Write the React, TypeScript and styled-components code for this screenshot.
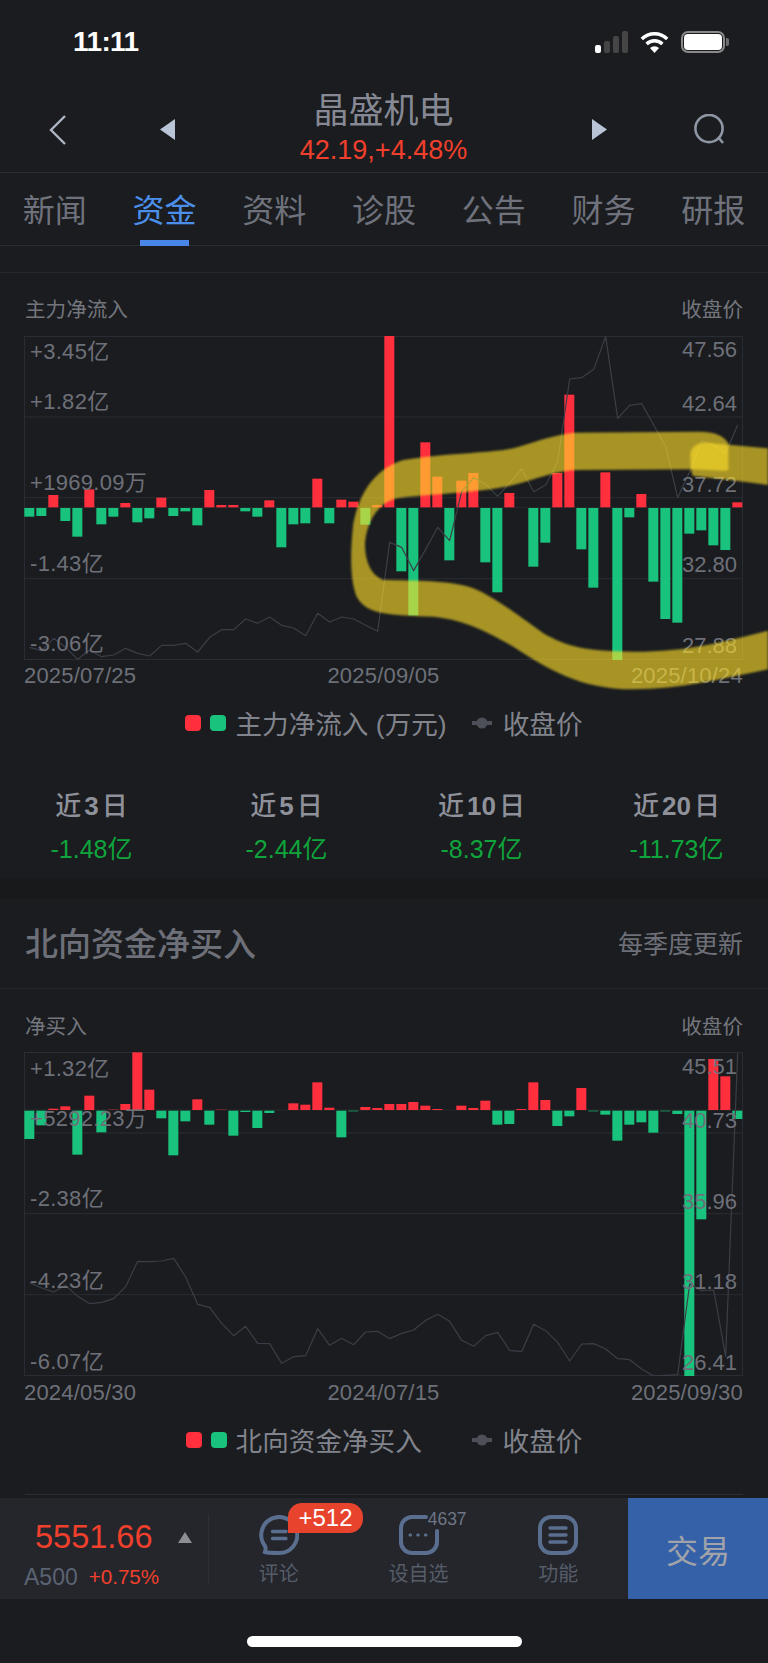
import React from "react";
import styled, { createGlobalStyle } from "styled-components";

interface AxisTick {
  text: string;
  y: number;
}

interface FlowChartProps {
  bars: number[];
  close: number[];
  baseline: number;
  left: AxisTick[];
  right: AxisTick[];
}

const RED = "#ff2f3d";
const GREEN = "#19c37d";
const QUOTE_RED = "#f0402c";

// chart series are in viewBox units, three per screen pixel
const FLOW_BARS = [
  -26, -24, 37, -39, -86, 54, -49, -26, 13, -43, -31, 29, -24, -10, -52, 52, 7, 7, -10, -26, 21,
  -118, -49, -46, 86, -46, 23, 17, -50, 7, 514, -190, -322, 195, 92, -157, 80, 103, -163, -253, 43,
  0, -176, -104, 103, 338, -124, -239, 105, -456, -28, 40, -221, -333, -344, -77, -67, -112, -126, 15,
];

const FLOW_CLOSE = [
  934, 944, 907, 934, 970, 942, 962, 957, 937, 952, 960, 928, 928, 922, 948, 904, 881, 881, 849, 862,
  843, 868, 876, 899, 832, 858, 843, 849, 868, 886, 619, 634, 704, 640, 574, 614, 467, 425, 445, 481,
  440, 399, 467, 447, 377, 129, 125, 100, 2, 247, 208, 203, 267, 332, 485, 407, 315, 327, 352, 267,
];

const NORTH_BARS = [
  -85, -44, 4, 11, -132, 43, -65, 1, 18, 173, 61, -23, -134, -32, 32, -42, 1, -75, -4, -52, -7, 0, 20,
  16, 83, 7, -80, -2, 9, 6, 18, 18, 24, 13, 3, 0, 13, 6, 28, -42, -40, 3, 83, 30, -46, -17, 66, -2, -12,
  -90, -42, -35, -66, -2, -10, -797, -326, 153, 101, -25,
];

const NORTH_CLOSE = [
  692, 708, 720, 700, 733, 755, 751, 740, 704, 628, 629, 627, 619, 675, 757, 766, 814, 851, 823, 874,
  875, 934, 914, 911, 830, 880, 859, 878, 840, 838, 860, 844, 834, 805, 787, 808, 865, 883, 851, 841,
  895, 899, 817, 836, 871, 927, 876, 875, 891, 920, 923, 951, 972, 970, 968, 696, 716, 714, 913, 3,
];

const GlobalStyle = createGlobalStyle`
  html,
  body {
    margin: 0;
    background: #1a1c1f;
    font-family: "Liberation Sans", "Noto Sans CJK SC", sans-serif;
  }
`;

const Page = styled.div`
  position: relative;
  width: 768px;
  height: 1663px;
  overflow: hidden;
  background: #1a1c1f;
`;

const StatusBar = styled.div`
  display: flex;
  align-items: center;
  justify-content: space-between;
  height: 84px;
  box-sizing: border-box;
  padding: 0 39px 0 73px;
`;

const Clock = styled.div`
  color: #fff;
  font-size: 28px;
  font-weight: 700;
  letter-spacing: -0.6px;
`;

const StatusIcons = styled.div`
  display: flex;
  align-items: center;
  gap: 12px;
`;

const SignalBars = styled.div`
  display: flex;
  align-items: flex-end;
  gap: 3px;
  height: 22px;
`;

const SignalBar = styled.span<{ $height: number; $on?: boolean }>`
  width: 6px;
  height: ${(p) => p.$height}px;
  border-radius: 2px;
  background: ${(p) => (p.$on ? "#fff" : "#454545")};
`;

const Battery = styled.div`
  position: relative;
  width: 44px;
  height: 22px;
  box-sizing: border-box;
  border: 2px solid #8a8a8a;
  border-radius: 7px;
  padding: 1px;
  margin-right: 4px;

  &::before {
    content: "";
    display: block;
    width: 100%;
    height: 100%;
    border-radius: 4px;
    background: #fff;
  }

  &::after {
    content: "";
    position: absolute;
    right: -6px;
    top: 5px;
    width: 3px;
    height: 8px;
    border-radius: 0 2px 2px 0;
    background: #6d6d6d;
  }
`;

const Header = styled.div`
  display: flex;
  align-items: center;
  justify-content: space-between;
  height: 89px;
  box-sizing: border-box;
  padding: 0 43px 0 49px;
  border-bottom: 1px solid #2a2c30;
`;

const HeaderGroup = styled.div<{ $width: number }>`
  display: flex;
  align-items: center;
  justify-content: space-between;
  width: ${(p) => p.$width}px;
  padding-top: 3px;
`;

const TitleBlock = styled.div`
  display: flex;
  flex-direction: column;
  align-items: center;
`;

const Title = styled.div`
  color: #868993;
  font-size: 35px;
  line-height: 42px;
`;

const Quote = styled.div`
  margin-top: 2px;
  color: ${QUOTE_RED};
  font-size: 27px;
  line-height: 32px;
`;

const Tabs = styled.div`
  display: flex;
  height: 73px;
  box-sizing: border-box;
  border-bottom: 1px solid #2a2c30;
`;

const Tab = styled.div<{ $active?: boolean }>`
  position: relative;
  flex: 1;
  display: flex;
  align-items: center;
  justify-content: center;
  padding-bottom: 2px;
  color: ${(p) => (p.$active ? "#4b8fea" : "#6f727c")};
  font-size: 32px;

  &::after {
    content: "";
    display: ${(p) => (p.$active ? "block" : "none")};
    position: absolute;
    left: 30px;
    bottom: -1px;
    width: 49px;
    height: 6px;
    background: #4a86e8;
  }
`;

const Strip = styled.div`
  height: 27px;
  box-sizing: border-box;
  border-bottom: 1px solid #25272b;
`;

const Section = styled.section`
  position: relative;
`;

const ChartCaption = styled.div<{ $top: number }>`
  display: flex;
  justify-content: space-between;
  align-items: center;
  height: 63px;
  box-sizing: border-box;
  padding: ${(p) => p.$top}px 25px 0;
  color: #74767e;
  font-size: 20.6px;
`;

const ChartFrame = styled.div`
  position: relative;
  width: 719px;
  height: 324px;
  margin-left: 24px;
`;

const ChartSvg = styled.svg`
  display: block;
  width: 719px;
  height: 324px;
`;

const GridLine = styled.line`
  stroke: #2a2c33;
  stroke-width: 3;
`;

const Baseline = styled.line`
  stroke: #26282e;
  stroke-width: 3;
`;

const Bar = styled.rect<{ $up: boolean }>`
  fill: ${(p) => (p.$up ? RED : GREEN)};
`;

const CloseLine = styled.polyline`
  fill: none;
  stroke: #3c3e47;
  stroke-width: 3.6;
  stroke-linejoin: round;
`;

const LeftAxisLabel = styled.span<{ $y: number }>`
  position: absolute;
  left: 6px;
  top: ${(p) => p.$y - 3}px;
  transform: translateY(-50%);
  color: #6e7079;
  font-size: 22px;
  letter-spacing: 0.3px;
  white-space: nowrap;
`;

const RightAxisLabel = styled.span<{ $y: number }>`
  position: absolute;
  right: 6px;
  top: ${(p) => p.$y}px;
  transform: translateY(-50%);
  color: #6e7079;
  font-size: 22px;
  white-space: nowrap;
`;

const DateRow = styled.div<{ $height: number }>`
  display: flex;
  justify-content: space-between;
  align-items: center;
  height: ${(p) => p.$height}px;
  padding: 0 25px 0 24px;
  color: #6e7079;
  font-size: 22px;
  letter-spacing: 0.2px;
`;

const Legend = styled.div<{ $height: number }>`
  display: flex;
  align-items: center;
  justify-content: center;
  height: ${(p) => p.$height}px;
  box-sizing: border-box;
  padding-bottom: 5px;
  color: #82848d;
  font-size: 26.6px;
`;

const Swatch = styled.span<{ $color: string }>`
  width: 16px;
  height: 16px;
  border-radius: 4px;
  margin-right: 9px;
  background: ${(p) => p.$color};
`;

const LegendName = styled.span`
  min-width: 211px;
  white-space: nowrap;
`;

const LegendMark = styled.svg`
  width: 20px;
  height: 14px;
  margin: 0 11px 0 25px;
`;

const Stats = styled.div`
  display: grid;
  grid-template-columns: repeat(4, 195px);
  justify-content: center;
  height: 120px;
  box-sizing: border-box;
  padding-top: 31px;
`;

const Stat = styled.div`
  display: flex;
  flex-direction: column;
  align-items: center;
`;

const StatLabel = styled.div`
  color: #8f919a;
  font-size: 26px;
  font-weight: 500;
  line-height: 34px;
`;

const StatDays = styled.b`
  margin: 0 3px;
`;

const StatValue = styled.div`
  margin-top: 10px;
  color: #0fa53c;
  font-size: 25px;
  line-height: 32px;
`;

const SectionGap = styled.div`
  height: 21px;
  background: #17191b;
`;

const SectionHead = styled.div`
  display: flex;
  align-items: center;
  justify-content: space-between;
  height: 90px;
  box-sizing: border-box;
  padding: 0 25px 3px;
  border-bottom: 1px solid #25272b;
`;

const SectionTitle = styled.div`
  color: #6e7079;
  font-size: 33px;
  font-weight: 500;
`;

const SectionNote = styled.div`
  color: #6e7079;
  font-size: 25px;
`;

const BarDivider = styled.div`
  height: 1px;
  margin: 20px 25px 3px;
  background: #2a2c33;
`;

const BottomBar = styled.div`
  display: flex;
  height: 101px;
  background: #24262c;
`;

const IndexBlock = styled.div`
  display: flex;
  flex-direction: column;
  width: 208px;
  padding-top: 17px;
`;

const IndexTop = styled.div`
  display: flex;
  align-items: center;
  gap: 26px;
  padding-left: 35px;
  height: 44px;
`;

const IndexPrice = styled.div`
  color: ${QUOTE_RED};
  font-size: 32.5px;
`;

const UpArrow = styled.span`
  width: 0;
  height: 0;
  border-left: 7.5px solid transparent;
  border-right: 7.5px solid transparent;
  border-bottom: 11px solid #8c8e95;
`;

const IndexBottom = styled.div`
  display: flex;
  align-items: center;
  gap: 11px;
  height: 36px;
  padding-left: 24px;
  font-size: 20.6px;
`;

const IndexName = styled.span`
  color: #5b6373;
  font-size: 23px;
`;

const IndexChange = styled.span`
  color: ${QUOTE_RED};
`;

const VerticalRule = styled.div`
  align-self: center;
  width: 1px;
  height: 70px;
  background: #2e3036;
`;

const NavItem = styled.div`
  position: relative;
  flex: 1;
  display: flex;
  flex-direction: column;
  align-items: center;
  padding-top: 17px;
`;

const NavIcon = styled.svg`
  width: 40px;
  height: 40px;
  fill: none;
  stroke: #5a6f8f;
  stroke-width: 4;
  stroke-linecap: round;
`;

const NavLabel = styled.div`
  margin-top: 7px;
  color: #565c68;
  font-size: 20px;
  line-height: 24px;
`;

const CountBadge = styled.span`
  position: absolute;
  left: 79px;
  top: 5px;
  display: flex;
  align-items: center;
  justify-content: center;
  width: 75px;
  height: 30px;
  border-radius: 14px 14px 14px 0;
  background: #e8432d;
  color: #fff;
  font-size: 24px;
`;

const WatchCount = styled.span`
  position: absolute;
  left: 79px;
  top: 12px;
  color: #6e7584;
  font-size: 17.5px;
  line-height: 18px;
`;

const TradeButton = styled.div`
  display: flex;
  align-items: center;
  justify-content: center;
  width: 140px;
  background: #3561a8;
  color: #a0a3aa;
  font-size: 32px;
`;

const HomeIndicator = styled.div`
  position: absolute;
  left: 247px;
  top: 1636px;
  width: 275px;
  height: 11px;
  border-radius: 6px;
  background: #fff;
`;

const MarkerStroke = styled.svg`
  position: absolute;
  left: 340px;
  top: 147px;
  width: 428px;
  height: 280px;
  filter: blur(1px);
  pointer-events: none;
`;

const InkPath = styled.path`
  fill: rgba(255, 223, 42, 0.62);
`;

const FlowChart: React.FC<FlowChartProps> = ({ bars, close, baseline, left, right }) => (
  <ChartFrame>
    <ChartSvg viewBox="0 0 2157 972">
      <rect x="1.5" y="1.5" width="2154" height="969" fill="none" stroke="#2a2c33" strokeWidth="3" />
      {[243, 485, 728].map((y) => (
        <GridLine key={y} x1="0" x2="2157" y1={y} y2={y} />
      ))}
      <Baseline x1="0" x2="2157" y1={baseline} y2={baseline} />
      {bars.map((value, i) => (
        <Bar
          key={i}
          $up={value > 0}
          x={36 * i + 1}
          y={value > 0 ? baseline - value : baseline + 2}
          width="30"
          height={Math.abs(value)}
        />
      ))}
      <CloseLine points={close.map((y, i) => `${17 + 36 * i},${y}`).join(" ")} />
    </ChartSvg>
    {left.map((tick) => (
      <LeftAxisLabel key={tick.text} $y={tick.y}>
        {tick.text}
      </LeftAxisLabel>
    ))}
    {right.map((tick) => (
      <RightAxisLabel key={tick.text} $y={tick.y}>
        {tick.text}
      </RightAxisLabel>
    ))}
  </ChartFrame>
);

const ChartLegend: React.FC<{ name: string; height: number }> = ({ name, height }) => (
  <Legend $height={height}>
    <Swatch $color={RED} />
    <Swatch $color={GREEN} />
    <LegendName>{name}</LegendName>
    <LegendMark viewBox="0 0 20 14">
      <line x1="0" x2="20" y1="7" y2="7" stroke="#4e5059" strokeWidth="4" />
      <circle cx="10" cy="7" r="5.5" fill="#4e5059" />
    </LegendMark>
    <span>收盘价</span>
  </Legend>
);

const TABS = ["新闻", "资金", "资料", "诊股", "公告", "财务", "研报"];

const STATS = [
  { days: 3, value: "-1.48亿" },
  { days: 5, value: "-2.44亿" },
  { days: 10, value: "-8.37亿" },
  { days: 20, value: "-11.73亿" },
];

export default function App() {
  return (
    <Page>
      <GlobalStyle />
      <StatusBar>
        <Clock>11:11</Clock>
        <StatusIcons>
          <SignalBars>
            <SignalBar $height={8} $on />
            <SignalBar $height={12} />
            <SignalBar $height={17} />
            <SignalBar $height={22} />
          </SignalBars>
          <svg width="29" height="22" viewBox="0 0 29 22">
            <path d="M1.8 8 A18 18 0 0 1 27.2 8" fill="none" stroke="#fff" strokeWidth="3.4" />
            <path d="M6.6 13 A11.4 11.4 0 0 1 22.4 13" fill="none" stroke="#fff" strokeWidth="3.4" />
            <path d="M14.5 22 L10 17 A6.4 6.4 0 0 1 19 17 Z" fill="#fff" />
          </svg>
          <Battery />
        </StatusIcons>
      </StatusBar>

      <Header>
        <HeaderGroup $width={126}>
          <svg width="17" height="30" viewBox="0 0 17 30">
            <path d="M16 1 L2 15 L16 29" fill="none" stroke="#aeb6c4" strokeWidth="2.4" />
          </svg>
          <svg width="15" height="21" viewBox="0 0 15 21">
            <path d="M15 0 V21 L0 10.5 Z" fill="#b9c5d6" />
          </svg>
        </HeaderGroup>
        <TitleBlock>
          <Title>晶盛机电</Title>
          <Quote>42.19,+4.48%</Quote>
        </TitleBlock>
        <HeaderGroup $width={133}>
          <svg width="15" height="21" viewBox="0 0 15 21">
            <path d="M0 0 V21 L15 10.5 Z" fill="#b9c5d6" />
          </svg>
          <svg width="31" height="31" viewBox="0 0 31 31">
            <circle cx="15" cy="14.5" r="13.6" fill="none" stroke="#8e95a3" strokeWidth="2.6" />
            <path d="M24 23 L29 29" fill="none" stroke="#8e95a3" strokeWidth="2.6" />
          </svg>
        </HeaderGroup>
      </Header>

      <Tabs>
        {TABS.map((tab) => (
          <Tab key={tab} $active={tab === "资金"}>
            {tab}
          </Tab>
        ))}
      </Tabs>
      <Strip />

      <Section>
        <ChartCaption $top={7}>
          <span>主力净流入</span>
          <span>收盘价</span>
        </ChartCaption>
        <FlowChart
          bars={FLOW_BARS}
          close={FLOW_CLOSE}
          baseline={514}
          left={[
            { text: "+3.45亿", y: 16 },
            { text: "+1.82亿", y: 66 },
            { text: "+1969.09万", y: 147 },
            { text: "-1.43亿", y: 228 },
            { text: "-3.06亿", y: 308 },
          ]}
          right={[
            { text: "47.56", y: 14 },
            { text: "42.64", y: 68 },
            { text: "37.72", y: 149 },
            { text: "32.80", y: 229 },
            { text: "27.88", y: 310 },
          ]}
        />
        <DateRow $height={32}>
          <span>2025/07/25</span>
          <span>2025/09/05</span>
          <span>2025/10/24</span>
        </DateRow>
        <ChartLegend name="主力净流入 (万元)" height={66} />
        <Stats>
          {STATS.map((stat) => (
            <Stat key={stat.days}>
              <StatLabel>
                近<StatDays>{stat.days}</StatDays>日
              </StatLabel>
              <StatValue>{stat.value}</StatValue>
            </Stat>
          ))}
        </Stats>
        {/* hand-drawn highlighter loop across the chart */}
        <MarkerStroke viewBox="0 0 1284 840">
          <InkPath d="M1165 70 C1150 45 1120 35 1080 35 L700 38 C640 45 570 70 520 85 C440 100 300 100 190 120 C110 145 60 210 40 310 C30 400 30 480 50 530 C80 585 150 585 280 590 C380 600 450 640 520 680 C620 745 720 808 880 808 C1020 808 1150 775 1284 748 L1284 632 C1150 665 1050 695 880 695 C740 695 680 680 610 640 C520 575 460 530 400 505 C330 480 220 482 130 480 C90 465 75 420 75 370 C80 310 110 250 170 235 C260 222 420 220 520 195 C600 175 650 150 720 150 L1060 148 C1110 150 1150 155 1165 150 Z" />
          <InkPath d="M1052 95 C1060 75 1075 68 1100 68 L1284 85 L1284 195 L1170 180 L1060 168 C1052 160 1050 120 1052 95 Z" />
        </MarkerStroke>
      </Section>

      <SectionGap />

      <Section>
        <SectionHead>
          <SectionTitle>北向资金净买入</SectionTitle>
          <SectionNote>每季度更新</SectionNote>
        </SectionHead>
        <ChartCaption $top={9}>
          <span>净买入</span>
          <span>收盘价</span>
        </ChartCaption>
        <FlowChart
          bars={NORTH_BARS}
          close={NORTH_CLOSE}
          baseline={174}
          left={[
            { text: "+1.32亿", y: 17 },
            { text: "+5292.23万", y: 67 },
            { text: "-2.38亿", y: 147 },
            { text: "-4.23亿", y: 229 },
            { text: "-6.07亿", y: 310 },
          ]}
          right={[
            { text: "45.51", y: 15 },
            { text: "40.73", y: 69 },
            { text: "35.96", y: 150 },
            { text: "31.18", y: 230 },
            { text: "26.41", y: 311 },
          ]}
        />
        <DateRow $height={34}>
          <span>2024/05/30</span>
          <span>2024/07/15</span>
          <span>2025/09/30</span>
        </DateRow>
        <ChartLegend name="北向资金净买入" height={64} />
      </Section>

      <BarDivider />

      <BottomBar>
        <IndexBlock>
          <IndexTop>
            <IndexPrice>5551.66</IndexPrice>
            <UpArrow />
          </IndexTop>
          <IndexBottom>
            <IndexName>A500</IndexName>
            <IndexChange>+0.75%</IndexChange>
          </IndexBottom>
        </IndexBlock>
        <VerticalRule />
        <NavItem>
          <NavIcon viewBox="0 0 40 40">
            <path d="M20 38 C14 38 9 38 6 37 C7 34 7 33 6 31 A18 18 0 1 1 20 38 Z" />
            <path d="M13.5 16.5 H27 M13.5 23.5 H27" strokeWidth="3.4" />
          </NavIcon>
          <NavLabel>评论</NavLabel>
          <CountBadge>+512</CountBadge>
        </NavItem>
        <NavItem>
          <NavIcon viewBox="0 0 40 40">
            <path d="M27 2 H13 A11 11 0 0 0 2 13 V27 A11 11 0 0 0 13 38 H27 A11 11 0 0 0 38 27 V16" />
            <path d="M11 20 h0.6 M18.7 20 h0.6 M26.4 20 h0.6" strokeWidth="3" />
          </NavIcon>
          <NavLabel>设自选</NavLabel>
          <WatchCount>4637</WatchCount>
        </NavItem>
        <NavItem>
          <NavIcon viewBox="0 0 40 40">
            <rect x="2" y="2" width="36" height="36" rx="11" />
            <path d="M12 13 H28 M12 20 H28 M12 27 H28" strokeWidth="3.4" />
          </NavIcon>
          <NavLabel>功能</NavLabel>
        </NavItem>
        <TradeButton>交易</TradeButton>
      </BottomBar>

      <HomeIndicator />
    </Page>
  );
}
